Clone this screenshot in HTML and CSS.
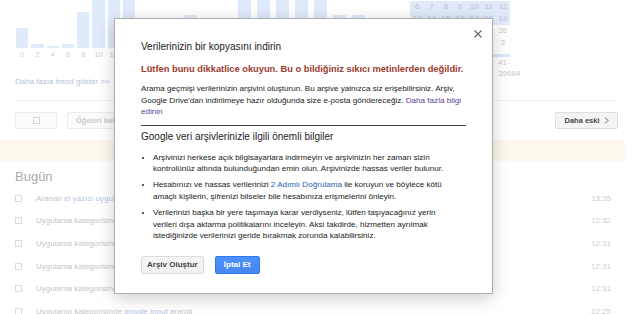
FILE: index.html
```html
<!DOCTYPE html>
<html lang="tr">
<head>
  <meta charset="UTF-8" />
  <meta name="viewport" content="width=device-width, initial-scale=1" />
  <title>Arama Geçmişi</title>
  <link rel="stylesheet" href="styles.css">
</head>
<body>
  <div class="page">
    <div class="stats">
      <div class="trends">
        <div class="charts">
          <div class="chart hours">
            <div class="col"><div class="plot"><div class="bar" style="height:20px"></div></div><span>0</span></div>
            <div class="col"><div class="plot"><div class="bar" style="height:4px"></div></div><span>2</span></div>
            <div class="col"><div class="plot"><div class="bar" style="height:2px"></div></div><span>4</span></div>
            <div class="col"><div class="plot"><div class="bar" style="height:4px"></div></div><span>6</span></div>
            <div class="col"><div class="plot"><div class="bar" style="height:36px"></div></div><span>8</span></div>
            <div class="col"><div class="plot"><div class="bar" style="height:48px"></div></div><span>10</span></div>
            <div class="col"><div class="plot"><div class="bar" style="height:48px"></div></div><span>12</span></div>
            <div class="col"><div class="plot"><div class="bar" style="height:48px"></div></div><span>14</span></div>
            <div class="col"><div class="plot"><div class="bar" style="height:26px"></div></div><span>16</span></div>
            <div class="col"><div class="plot"><div class="bar" style="height:22px"></div></div><span>18</span></div>
            <div class="col"><div class="plot"><div class="bar" style="height:28px"></div></div><span>20</span></div>
            <div class="col"><div class="plot"><div class="bar" style="height:33px"></div></div><span>22</span></div>
          </div>
          <div class="chart days">
            <div class="col"><div class="plot"><div class="bar" style="height:48px"></div></div><span>Pzt</span></div>
            <div class="col"><div class="plot"><div class="bar" style="height:48px"></div></div><span>Sal</span></div>
            <div class="col"><div class="plot"><div class="bar" style="height:48px"></div></div><span>Çar</span></div>
            <div class="col"><div class="plot"><div class="bar" style="height:48px"></div></div><span>Per</span></div>
            <div class="col"><div class="plot"><div class="bar" style="height:48px"></div></div><span>Cum</span></div>
            <div class="col"><div class="plot"><div class="bar" style="height:33px"></div></div><span>Cmt</span></div>
            <div class="col"><div class="plot"><div class="bar" style="height:33px"></div></div><span>Paz</span></div>
          </div>
        </div>
        <a class="more" href="#">Daha fazla trend göster &gt;&gt;</a>
      </div>

      <div class="side">
        <div class="calendar">
          <span class="sel">6</span><span class="sel">7</span><span class="sel">8</span><span class="sel">9</span><span class="sel">10</span><span class="sel">11</span><span class="sel">12</span>
          <span class="sel">13</span><span class="sel">14</span><span class="sel">15</span><span class="sel">16</span><span class="sel">17</span><span class="sel">18</span><span class="sel">19</span>
          <span>20</span><span>21</span><span>22</span><span>23</span><span>24</span><span>25</span><span>26</span>
          <span>27</span><span>28</span><span>29</span><span>30</span><span>1</span><span>2</span><span>3</span>
        </div>
        <div class="cal-bar"></div>
        <div class="totals">
          <div>41-</div>
          <div>39684</div>
        </div>
      </div>
    </div>

    <div class="toolbar">
      <div class="tb-btn check-btn"><span class="box"></span></div>
      <div class="tb-btn">Öğeleri kaldır</div>
      <div class="tb-btn older">Daha eski
        <svg width="5" height="7" viewBox="0 0 5 7"><polyline points="1,0.5 4,3.5 1,6.5" fill="none" stroke="#666" stroke-width="1"/></svg>
      </div>
    </div>

    <div class="notice"></div>

    <h2 class="day">Bugün</h2>
    <div class="rows">
      <div class="row"><span class="box"></span><span class="what">Aranan <a href="#">el yazısı uygulaması</a></span><span class="time">13:35</span></div>
      <div class="row"><span class="box"></span><span class="what">Uygulama kategorisinde <a href="#">el yazısı</a> arandı</span><span class="time">12:32</span></div>
      <div class="row"><span class="box"></span><span class="what">Uygulama kategorisinde <a href="#">google yazı</a> arandı</span><span class="time">12:31</span></div>
      <div class="row"><span class="box"></span><span class="what">Uygulama kategorisinde <a href="#">google klavye</a> arandı</span><span class="time">12:31</span></div>
      <div class="row"><span class="box"></span><span class="what">Uygulama kategorisinde <a href="#">google handwriting</a> arandı</span><span class="time">12:31</span></div>
      <div class="row"><span class="box"></span><span class="what">Uygulama kategorisinde <a href="#">google input</a> arandı</span><span class="time">12:25</span></div>
    </div>
  </div>

  <div class="dialog">
    <svg class="close" width="8" height="8" viewBox="0 0 8 8"><path d="M0.5 0.5 L7.5 7.5 M7.5 0.5 L0.5 7.5" stroke="#666" stroke-width="1.1"/></svg>
    <h1>Verilerinizin bir kopyasını indirin</h1>
    <p class="warning">Lütfen bunu dikkatlice okuyun. Bu o bildiğiniz sıkıcı metinlerden değildir.</p>
    <p class="intro">Arama geçmişi verilerinizin arşivini oluşturun. Bu arşive yalnızca siz erişebilirsiniz. Arşiv,<br>Google Drive'dan indirilmeye hazır olduğunda size e-posta göndereceğiz. <a class="visited" href="#">Daha fazla bilgi<br>edinin</a></p>
    <hr>
    <h3>Google veri arşivlerinizle ilgili önemli bilgiler</h3>
    <ul>
      <li>Arşivinizi herkese açık bilgisayarlara indirmeyin ve arşivinizin her zaman sizin<br>kontrolünüz altında bulunduğundan emin olun. Arşivinizde hassas veriler bulunur.</li>
      <li>Hesabınızı ve hassas verilerinizi <a href="#">2 Adımlı Doğrulama</a> ile koruyun ve böylece kötü<br>amaçlı kişilerin, şifrenizi bilseler bile hesabınıza erişmelerini önleyin.</li>
      <li>Verilerinizi başka bir yere taşımaya karar verdiyseniz, lütfen taşıyacağınız yerin<br>verileri dışa aktarma politikalarını inceleyin. Aksi takdirde, hizmetten ayrılmak<br>istediğinizde verilerinizi geride bırakmak zorunda kalabilirsiniz.</li>
    </ul>
    <div class="actions">
      <button class="btn">Arşiv Oluştur</button>
      <button class="btn primary">İptal Et</button>
    </div>
  </div>
</body>
</html>
```

FILE: styles.css
```css
body {
  margin: 0;
  font-family: "Liberation Sans", Arial, sans-serif;
  color: #c6c6c6;
  background: #fff;
  overflow: hidden;
}

a {
  text-decoration: none;
}

.page {
  padding: 0 17px 0 15px;
}

/* faded stats area behind the dialog */
.stats {
  display: flex;
  height: 100px;
  border-bottom: 1px solid #f1f1f1;
}
.trends {
  width: 395px;
}
.charts {
  display: flex;
  padding-left: 1px;
}
.chart {
  display: flex;
}
.hours {
  gap: 3px;
}
.hours .col {
  width: 12.3px;
}
.days {
  gap: 6px;
  margin-left: 41.4px;
}
.days .col {
  width: 13px;
}
.col {
  display: flex;
  flex-direction: column;
  align-items: center;
}
.plot {
  height: 48px;
  width: 100%;
  display: flex;
  align-items: flex-end;
}
.bar {
  width: 100%;
  background: #dfeafa;
}
.col span {
  margin-top: 2px;
  font-size: 8px;
  line-height: 10px;
  color: #d0d0d0;
}
.more {
  display: block;
  margin-top: 16px;
  font-size: 8px;
  line-height: 12px;
  color: #b6c1d6;
}

.side {
  width: 100px;
}
.calendar {
  margin-top: 1px;
  display: grid;
  grid-template-columns: repeat(7, 1fr);
  grid-auto-rows: 12px;
}
.calendar span {
  font-size: 8px;
  line-height: 12px;
  text-align: center;
  color: #cbcbcb;
}
.calendar .sel {
  background: #e0eaf9;
  color: #b9c4d6;
}
.cal-bar {
  height: 3px;
  margin-top: 5px;
  background: #d9e6f9;
}
.totals {
  padding-left: 88px;
  font-size: 8px;
  line-height: 11px;
  white-space: nowrap;
  color: #c8c8c8;
}

.toolbar {
  display: flex;
  gap: 10px;
  margin-top: 11px;
}
.tb-btn {
  height: 15px;
  padding: 0 8px;
  border: 1px solid #ececec;
  border-radius: 2px;
  background: #fbfbfb;
  font-size: 7.5px;
  font-weight: bold;
  line-height: 15px;
  color: #c9c9c9;
  display: flex;
  align-items: center;
  gap: 4px;
}
.check-btn {
  width: 24px;
  justify-content: center;
}
.tb-btn .box {
  width: 5px;
  height: 5px;
  border: 1px solid #d6d6d6;
}
.older {
  margin-left: auto;
  width: 45px;
  border-color: #dedede;
  background: #f4f4f4;
  color: #4a4a4a;
  justify-content: center;
}

.notice {
  height: 21px;
  margin: 11px -7px 0 -15px;
  background: #fdf9ee;
}

.day {
  margin: 8px 0 2px;
  font-size: 13px;
  font-weight: normal;
  line-height: 16px;
  color: #ababab;
}
.row {
  height: 22.6px;
  display: flex;
  align-items: center;
  padding-right: 7px;
  font-size: 8px;
}
.row .box {
  width: 5px;
  height: 5px;
  border: 1px solid #dadada;
  margin-right: 14px;
}
.what a {
  color: #b7c6e6;
}
.time {
  margin-left: auto;
  color: #cdcdcd;
}

/* dialog */
.dialog {
  position: absolute;
  left: 114px;
  top: 18px;
  width: 379px;
  box-sizing: border-box;
  padding: 21px 26px 19px;
  background: #fff;
  border: 1px solid #acacac;
  box-shadow: 0 4px 16px rgba(0,0,0,0.2);
  color: #222;
  font-size: 8.1px;
  line-height: 11.6px;
}
.close {
  position: absolute;
  top: 11px;
  right: 10px;
}
.dialog h1 {
  margin: 0;
  font-size: 10px;
  font-weight: normal;
  line-height: 14px;
}
.warning {
  margin: 9px 0 0;
  font-size: 9.3px;
  font-weight: bold;
  line-height: 12px;
  color: #9b3a2e;
  white-space: nowrap;
}
.intro {
  margin: 8px 0 0;
  white-space: nowrap;
}
.visited {
  color: #5b3d9b;
}
.dialog hr {
  margin: 7px 0 0;
  border: 0;
  border-top: 1px solid #454545;
}
.dialog h3 {
  margin: 4px 0 0;
  font-size: 10px;
  font-weight: normal;
  line-height: 14px;
}
.dialog ul {
  margin: 8px 0 0;
  padding-left: 12px;
  white-space: nowrap;
}
.dialog li + li {
  margin-top: 4.5px;
}
.dialog li a {
  color: #2a5db0;
}
.actions {
  display: flex;
  gap: 11px;
  margin-top: 14px;
}
.btn {
  height: 18px;
  min-width: 45px;
  padding: 0 5px;
  border: 1px solid #dcdcdc;
  border-radius: 2px;
  background: linear-gradient(#f5f5f5, #f1f1f1);
  font-family: inherit;
  font-size: 8px;
  font-weight: bold;
  color: #444;
}
.btn.primary {
  border-color: #3079ed;
  background: linear-gradient(#4d90fe, #4787ed);
  color: #fff;
}
```
